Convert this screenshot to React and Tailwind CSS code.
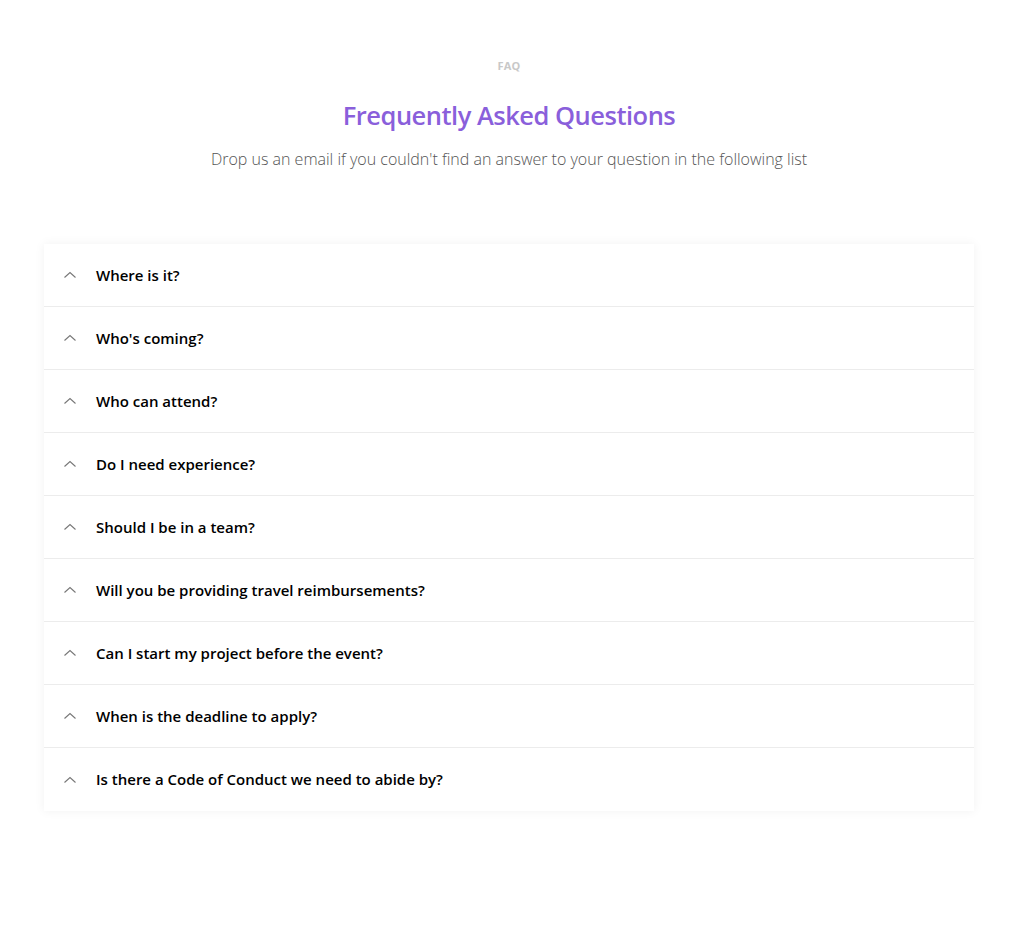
const questions = [
  "Where is it?",
  "Who's coming?",
  "Who can attend?",
  "Do I need experience?",
  "Should I be in a team?",
  "Will you be providing travel reimbursements?",
  "Can I start my project before the event?",
  "When is the deadline to apply?",
  "Is there a Code of Conduct we need to abide by?",
];

const Chevron = () => (
  <svg className="w-[14px] h-[14px] text-[#777]" viewBox="0 0 14 14" fill="none" stroke="currentColor" strokeWidth="1.1">
    <path d="M1.5 9.5 7 4.5l5.5 5" />
  </svg>
);

const App = () => {
  return (
    <div className="min-h-screen bg-white font-['Open_Sans',sans-serif]">
      <div className="w-[1018px]">
        <div className="pt-[59px] text-center">
          <p className="text-[11px] font-bold tracking-wide text-[#c8c8c8] leading-[14px]">FAQ</p>
          <h1 className="mt-[24px] text-[25.5px] font-semibold text-[#8a5fdb] leading-[36px] tracking-[-0.5px]">
            Frequently Asked Questions
          </h1>
          <p className="mt-[15px] text-[16px] font-light text-[#555] leading-[22px]">
            Drop us an email if you couldn't find an answer to your question in the following list
          </p>
        </div>

        <div className="mx-[44px] mt-[74px] bg-white shadow-[0_0_10px_rgba(0,0,0,0.06)]">
          {questions.map((q, i) => (
            <div
              key={q}
              className={`flex items-center h-[63px] pl-[19px] ${i < questions.length - 1 ? "border-b border-[#ececec]" : ""}`}
            >
              <Chevron />
              <span className="ml-[19px] text-[15px] font-semibold text-black">{q}</span>
            </div>
          ))}
        </div>
      </div>
    </div>
  );
};

export default App;
